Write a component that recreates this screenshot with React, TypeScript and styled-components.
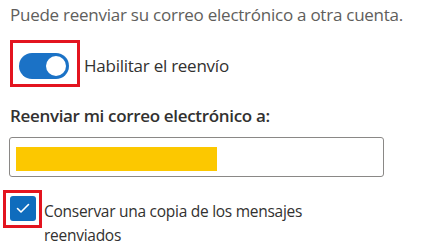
import React from 'react'
import styled, { createGlobalStyle } from 'styled-components'

const GlobalStyle = createGlobalStyle`
  html, body {
    margin: 0;
    padding: 0;
    background: #ffffff;
  }
  body {
    font-family: "Open Sans", "Noto Sans", "DejaVu Sans", sans-serif;
    color: #323130;
  }
`

const Page = styled.div`
  width: 374px;
  padding: 0 0 0 10px;
  display: flex;
  flex-direction: column;
`

const Intro = styled.p`
  margin: 0;
  font-size: 17px;
  letter-spacing: -0.25px;
  line-height: 30px;
  color: #605e5c;
  white-space: nowrap;
`

const ToggleRow = styled.div`
  margin-top: 10px;
  display: flex;
  align-items: center;
  gap: 4px;
`

const Highlight = styled.div<{ $w: number; $h: number }>`
  box-sizing: border-box;
  width: ${p => p.$w}px;
  height: ${p => p.$h}px;
  border: 3px solid #e3141f;
  display: flex;
  align-items: center;
  justify-content: center;
  flex-shrink: 0;
`

const Track = styled.button<{ $on: boolean }>`
  box-sizing: border-box;
  width: 50px;
  height: 26px;
  border: none;
  padding: 0 3px;
  border-radius: 13px;
  background: ${p => (p.$on ? '#1b72c6' : '#8a8886')};
  display: flex;
  align-items: center;
  justify-content: ${p => (p.$on ? 'flex-end' : 'flex-start')};
  margin: 4px 2px 0 0;
  cursor: pointer;
`

const Knob = styled.span`
  width: 20px;
  height: 20px;
  border-radius: 50%;
  background: #ffffff;
`

const Label = styled.span`
  font-size: 17px;
  letter-spacing: -0.25px;
  line-height: 24px;
  color: #323130;
`

const ToggleLabel = styled(Label)`
  padding-top: 4px;
`

const Heading = styled.div`
  margin-top: 16px;
  font-size: 17px;
  font-weight: 600;
  letter-spacing: -0.33px;
  line-height: 26px;
  color: #323130;
`

const Field = styled.div`
  box-sizing: border-box;
  margin-top: 8px;
  height: 40px;
  width: 375px;
  margin-left: -1px;
  border: 1px solid #8a8886;
  border-radius: 3px;
  padding: 9px 0 0 6px;
`

const Redacted = styled.div`
  width: 201px;
  height: 24px;
  background: #fcc800;
`

const CheckRow = styled.div`
  margin-top: 13px;
  margin-left: -7px;
  display: flex;
  align-items: flex-start;
  gap: 2px;
`

const Box = styled.span`
  width: 26px;
  height: 25px;
  border-radius: 3px;
  background: #0f6cbd;
  display: flex;
  align-items: center;
  justify-content: center;
  margin-top: -2px;
`

const CheckLabel = styled(Label)`
  padding-top: 9px;
  width: 330px;
  font-size: 15.5px;
  letter-spacing: -0.27px;
`

export default function App() {
  return (
    <>
      <GlobalStyle />
      <Page>
        <Intro>Puede reenviar su correo electrónico a otra cuenta.</Intro>
        <ToggleRow>
          <Highlight $w={70} $h={47}>
            <Track $on aria-label="Habilitar el reenvío">
              <Knob />
            </Track>
          </Highlight>
          <ToggleLabel>Habilitar el reenvío</ToggleLabel>
        </ToggleRow>
        <Heading>Reenviar mi correo electrónico a:</Heading>
        <Field>
          <Redacted />
        </Field>
        <CheckRow>
          <Highlight $w={39} $h={38}>
            <Box>
              <svg width="16" height="16" viewBox="0 0 16 16" fill="none">
                <path d="M2.5 8.5l3.5 3.5 7.5-7.5" stroke="#fff" strokeWidth="1.6" strokeLinecap="round" strokeLinejoin="round" />
              </svg>
            </Box>
          </Highlight>
          <CheckLabel>Conservar una copia de los mensajes reenviados</CheckLabel>
        </CheckRow>
      </Page>
    </>
  )
}
